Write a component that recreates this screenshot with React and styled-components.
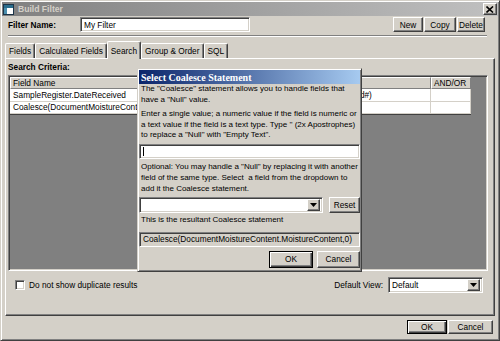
import styled, { createGlobalStyle, css } from "styled-components";

const GlobalStyle = createGlobalStyle`
  * {
    box-sizing: border-box;
  }

  html,
  body {
    margin: 0;
    padding: 0;
    background: #d4d0c8;
  }

  body {
    font-family: "Liberation Sans", Arial, sans-serif;
    font-size: 8.3px;
    color: #000;
  }
`;

const raised = css`
  border: 1px solid;
  border-color: #fff #404040 #404040 #fff;
  box-shadow: inset -1px -1px #808080;
  background: #d4d0c8;
`;

const sunken = css`
  border: 1px solid;
  border-color: #808080 #fff #fff #808080;
  box-shadow: inset 1px 1px #404040, inset -1px -1px #d4d0c8;
`;

const Window = styled.div`
  position: relative;
  width: 500px;
  height: 341px;
  display: flex;
  flex-direction: column;
  padding: 1px;
  border: 1px solid;
  border-color: #d4d0c8 #404040 #404040 #d4d0c8;
  box-shadow: inset 1px 1px #fff, inset -1px -1px #808080;
  background: #d4d0c8;
`;

const TitleBar = styled.div`
  height: 14px;
  display: flex;
  align-items: center;
  padding: 0 1px 0 1px;
  background: linear-gradient(to right, #808080, #c0c0c0);
`;

const Caption = styled.span`
  margin-left: 4px;
  font-weight: bold;
  font-size: 8.6px;
  color: #d4d0c8;
`;

const CloseButton = styled.div`
  ${raised};
  margin-left: auto;
  width: 14px;
  height: 12px;
  display: flex;
  align-items: center;
  justify-content: center;
`;

const Header = styled.div`
  padding: 1px 11px 0 6px;
`;

const FilterRow = styled.div`
  display: flex;
  align-items: center;
  height: 15px;
`;

const FieldLabel = styled.span`
  width: 72px;
  font-weight: bold;
`;

const TextBox = styled.div`
  ${sunken};
  width: ${(p) => p.$width || 170}px;
  height: 15px;
  padding: 0 3px;
  display: flex;
  align-items: center;
  background: ${(p) => (p.$readOnly ? "#d4d0c8" : "#fff")};
  white-space: nowrap;
  overflow: hidden;
`;

const Caret = styled.span`
  width: 1px;
  height: 9px;
  background: #000;
`;

const ButtonGroup = styled.div`
  margin-left: auto;
  margin-right: 2px;
  display: flex;
  gap: 1px;
`;

const Button = styled.div`
  ${raised};
  width: ${(p) => p.$width}px;
  height: ${(p) => p.$height || 15}px;
  display: flex;
  align-items: center;
  justify-content: center;
  ${(p) =>
    p.$default &&
    css`
      border-color: #000;
      box-shadow: inset 1px 1px #fff, inset -1px -1px #404040,
        inset -2px -2px #808080;
    `}
`;

const Separator = styled.div`
  margin-top: 3px;
  height: 2px;
  border-top: 1px solid #808080;
  border-bottom: 1px solid #fff;
`;

const TabArea = styled.div`
  flex: 1;
  display: flex;
  flex-direction: column;
  padding: 4px 3px 0 3px;
`;

const TabStrip = styled.div`
  height: 17px;
  display: flex;
  align-items: flex-end;
`;

const Tab = styled.div`
  position: relative;
  height: ${(p) => (p.$active ? 18 : 15)}px;
  margin-bottom: ${(p) => (p.$active ? -1 : 0)}px;
  padding: 0 3px;
  display: flex;
  align-items: center;
  border: 1px solid;
  border-bottom: none;
  border-color: #fff #404040 #404040 #fff;
  border-radius: 2px 2px 0 0;
  box-shadow: inset -1px 0 #808080;
  background: #d4d0c8;
  z-index: ${(p) => (p.$active ? 1 : 0)};
`;

const Panel = styled.div`
  flex: 1;
  display: flex;
  flex-direction: column;
  padding: 2px 6px 0 2px;
  border: 1px solid;
  border-color: #fff #404040 #404040 #fff;
  box-shadow: inset -1px -1px #808080;
`;

const SectionLabel = styled.div`
  font-weight: bold;
  line-height: 12px;
`;

const Grid = styled.div`
  ${sunken};
  margin-top: 2px;
  height: 196px;
  padding: 1px;
  background: #808080;
  overflow: hidden;
`;

const Table = styled.div`
  width: 461px;
  display: grid;
  grid-template-columns: 140px 152px 129px 40px;
  border-right: 1px solid #404040;
  border-bottom: 1px solid #404040;
`;

const HeadCell = styled.div`
  height: 12px;
  padding-left: 2px;
  display: flex;
  align-items: center;
  border: 1px solid;
  border-color: #fff #808080 #808080 #fff;
  background: #d4d0c8;
  white-space: nowrap;
  overflow: hidden;
`;

const Cell = styled.div`
  height: 12.5px;
  padding-left: 3px;
  display: flex;
  align-items: center;
  background: #fff;
  border-right: 1px solid #d4d0c8;
  border-bottom: 1px solid #d4d0c8;
  white-space: nowrap;
  overflow: hidden;
`;

const OptionsRow = styled.div`
  margin-top: 6px;
  height: 16px;
  display: flex;
  align-items: center;
`;

const CheckBox = styled.div`
  ${sunken};
  margin-left: 7px;
  width: 10px;
  height: 10px;
  background: #fff;
`;

const CheckLabel = styled.span`
  margin-left: 4px;
`;

const ViewLabel = styled.span`
  margin-left: auto;
  margin-right: 5px;
`;

const SelectBox = styled.div`
  ${sunken};
  width: ${(p) => p.$width}px;
  height: 16px;
  padding: 2px 2px 2px 3px;
  display: flex;
  align-items: center;
  background: #fff;
  margin-right: ${(p) => p.$gap || 0}px;
`;

const SelectText = styled.span`
  flex: 1;
`;

const DropButton = styled.div`
  ${raised};
  width: 13px;
  height: 12px;
  display: flex;
  align-items: center;
  justify-content: center;
`;

const Footer = styled.div`
  height: 23px;
  display: flex;
  justify-content: flex-end;
  align-items: flex-start;
  gap: 1px;
  padding: 4px 5px 0 0;
`;

const Dialog = styled.div`
  position: absolute;
  left: 136px;
  top: 67px;
  width: 225px;
  display: flex;
  flex-direction: column;
  padding: 1px;
  border: 1px solid;
  border-color: #d4d0c8 #404040 #404040 #d4d0c8;
  box-shadow: inset 1px 1px #fff, inset -1px -1px #808080;
  background: #d4d0c8;
`;

const DialogTitle = styled.div`
  height: 14px;
  padding-left: 2px;
  display: flex;
  align-items: center;
  background: linear-gradient(to right, #0a246a, #a6caf0);
  color: #fff;
  font-family: "Liberation Serif", "Times New Roman", serif;
  font-weight: bold;
  font-size: 10px;
`;

const DialogBody = styled.div`
  display: flex;
  flex-direction: column;
  padding: 0 0 2px 0;
`;

const Para = styled.p`
  margin: ${(p) => p.$top || 0}px 0 0 0;
  padding: 0 2px;
  font-size: 8px;
  line-height: ${(p) => p.$line || 10.5}px;
  white-space: nowrap;
`;

const InlineRow = styled.div`
  margin-top: ${(p) => p.$top || 3}px;
  display: flex;
  align-items: center;
`;

const DialogButtons = styled.div`
  margin-top: 4px;
  display: flex;
  justify-content: flex-end;
  gap: 4px;
`;

function AppIcon() {
  return (
    <svg width="11" height="11" viewBox="0 0 11 11">
      <rect x="0.5" y="0.5" width="10" height="10" fill="#fff" stroke="#1c3448" />
      <rect x="1" y="1" width="9" height="3" fill="#2a6d8c" />
      <rect x="1" y="4" width="3" height="6" fill="#4b8fae" />
    </svg>
  );
}

function CloseGlyph() {
  return (
    <svg width="8" height="7" viewBox="0 0 8 7">
      <path d="M0.5 0.5 L7 6.5 M7 0.5 L0.5 6.5" stroke="#000" strokeWidth="1.6" />
    </svg>
  );
}

function Arrow() {
  return (
    <svg width="7" height="4" viewBox="0 0 7 4">
      <path d="M0 0 H7 L3.5 4 Z" fill="#000" />
    </svg>
  );
}

const criteria = [
  {
    field: "SampleRegister.DateReceived",
    operator: "=",
    value: "(#DateReceived#)",
    join: "",
  },
  {
    field: "Coalesce(DocumentMoistureContent.MoistureContent,0)",
    operator: "",
    value: "",
    join: "",
  },
];

const tabs = ["Fields", "Calculated Fields", "Search", "Group & Order", "SQL"];

export default function App() {
  return (
    <>
      <GlobalStyle />
      <Window>
        <TitleBar>
          <AppIcon />
          <Caption>Build Filter</Caption>
          <CloseButton>
            <CloseGlyph />
          </CloseButton>
        </TitleBar>

        <Header>
          <FilterRow>
            <FieldLabel>Filter Name:</FieldLabel>
            <TextBox $width={170}>My Filter</TextBox>
            <ButtonGroup>
              <Button $width={30}>New</Button>
              <Button $width={32}>Copy</Button>
              <Button $width={28}>Delete</Button>
            </ButtonGroup>
          </FilterRow>
          <Separator />
        </Header>

        <TabArea>
          <TabStrip>
            {tabs.map((t) => (
              <Tab key={t} $active={t === "Search"}>
                {t}
              </Tab>
            ))}
          </TabStrip>
          <Panel>
            <SectionLabel>Search Criteria:</SectionLabel>
            <Grid>
              <Table>
                <HeadCell>Field Name</HeadCell>
                <HeadCell>Operator</HeadCell>
                <HeadCell>Value</HeadCell>
                <HeadCell>AND/OR</HeadCell>
                {criteria.map((c, i) => [
                  <Cell key={`f${i}`}>{c.field}</Cell>,
                  <Cell key={`o${i}`}>{c.operator}</Cell>,
                  <Cell key={`v${i}`}>{c.value}</Cell>,
                  <Cell key={`j${i}`}>{c.join}</Cell>,
                ])}
              </Table>
            </Grid>
            <OptionsRow>
              <CheckBox />
              <CheckLabel>Do not show duplicate results</CheckLabel>
              <ViewLabel>Default View:</ViewLabel>
              <SelectBox $width={95} $gap={5}>
                <SelectText>Default</SelectText>
                <DropButton>
                  <Arrow />
                </DropButton>
              </SelectBox>
            </OptionsRow>
          </Panel>
        </TabArea>

        <Footer>
          <Button $width={40} $height={14} $default>
            OK
          </Button>
          <Button $width={45} $height={14}>
            Cancel
          </Button>
        </Footer>

        <Dialog>
          <DialogTitle>Select Coalesce Statement</DialogTitle>
          <DialogBody>
            <Para>
              The "Coalesce" statement allows you to handle fields that
              <br />
              have a "Null" value.
            </Para>
            <Para $top={4}>
              Enter a single value; a numeric value if the field is numeric or
              <br />
              a text value if the field is a text type. Type '' (2x Apostrophes)
              <br />
              to replace a "Null" with "Empty Text".
            </Para>
            <InlineRow>
              <TextBox $width={221}>
                <Caret />
              </TextBox>
            </InlineRow>
            <Para $top={2} $line={11}>
              Optional: You may handle a "Null" by replacing it with another
              <br />
              field of the same type. Select&nbsp; a field from the dropdown to
              <br />
              add it the Coalesce statement.
            </Para>
            <InlineRow>
              <SelectBox $width={184} $gap={6}>
                <SelectText />
                <DropButton>
                  <Arrow />
                </DropButton>
              </SelectBox>
              <Button $width={31} $height={16}>
                Reset
              </Button>
            </InlineRow>
            <Para $top={1} $line={11}>
              This is the resultant Coalesce statement
            </Para>
            <InlineRow $top={7}>
              <TextBox $width={221} $readOnly>
                Coalesce(DocumentMoistureContent.MoistureContent,0)
              </TextBox>
            </InlineRow>
            <DialogButtons>
              <Button $width={44} $height={17} $default>
                OK
              </Button>
              <Button $width={43} $height={17}>
                Cancel
              </Button>
            </DialogButtons>
          </DialogBody>
        </Dialog>
      </Window>
    </>
  );
}
